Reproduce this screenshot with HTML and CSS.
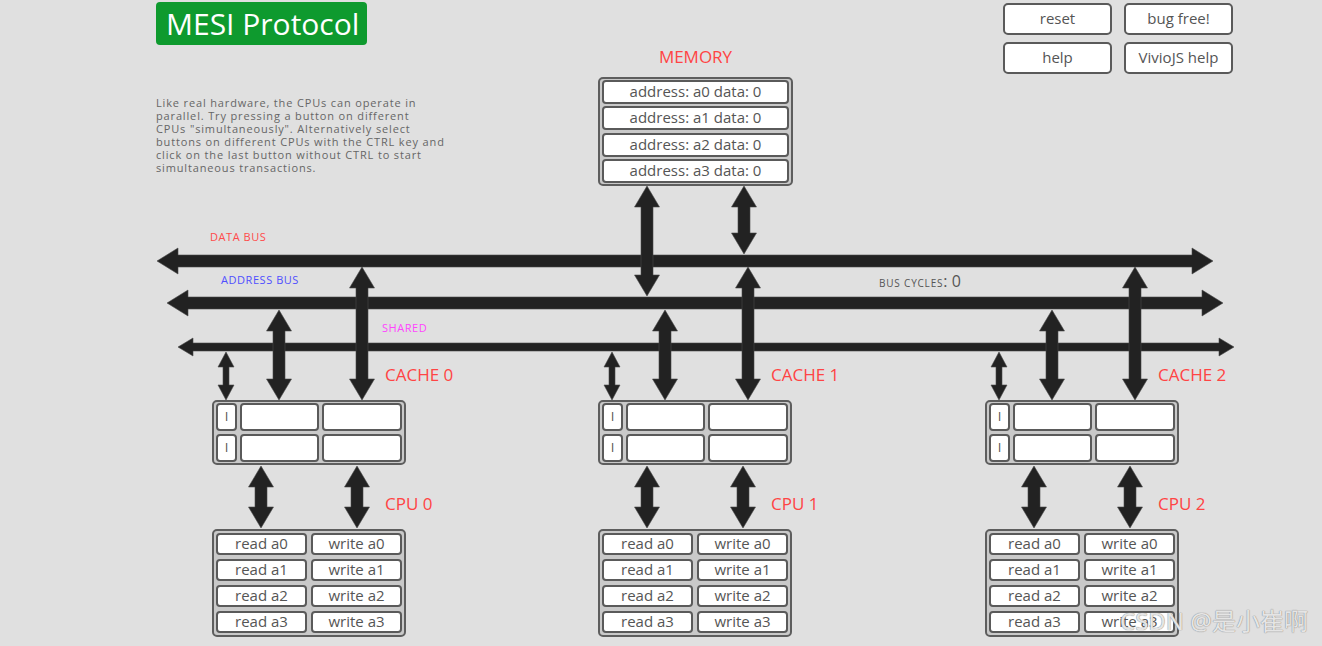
FILE: index.html
```
<!DOCTYPE html>
<html>
<head>
<meta charset="utf-8">
<title>MESI Protocol</title>
<link rel="stylesheet" href="styles.css">
</head>
<body>
<div class="stage">
  <svg class="wires" width="1322" height="646" viewBox="0 0 1322 646">
    <defs>
      <g id="cacheArrows">
        <polygon points="226,352 234,367 229,367 229,385 234,385 226,400 218,385 223,385 223,367 218,367"/>
        <polygon points="279,310 291.5,331 285,331 285,379 291.5,379 279,400 266.5,379 273,379 273,331 266.5,331"/>
        <polygon points="362,267 374.5,288 368,288 368,379 374.5,379 362,400 349.5,379 356,379 356,288 349.5,288"/>
        <polygon points="261,466 273.5,487 267,487 267,507 273.5,507 261,528 248.5,507 255,507 255,487 248.5,487"/>
        <polygon points="357,466 369.5,487 363,487 363,507 369.5,507 357,528 344.5,507 351,507 351,487 344.5,487"/>
      </g>
    </defs>
    <g class="arrows">
      <polygon points="157,261 178,248 178,255 1192,255 1192,248 1213,261 1192,274 1192,267 178,267 178,274"/>
      <polygon points="167,303 188,290 188,297 1202,297 1202,290 1223,303 1202,316 1202,309 188,309 188,316"/>
      <polygon points="178,347 193,338 193,343 1219,343 1219,338 1234,347 1219,356 1219,351 193,351 193,356"/>
      <polygon points="647,186 659.5,207 653,207 653,275 659.5,275 647,296 634.5,275 641,275 641,207 634.5,207"/>
      <polygon points="744,186 756.5,207 750,207 750,233 756.5,233 744,254 731.5,233 738,233 738,207 731.5,207"/>
      <use href="#cacheArrows"/>
      <use href="#cacheArrows" x="386"/>
      <use href="#cacheArrows" x="773"/>
    </g>
  </svg>

  <div class="title">MESI Protocol</div>
  <p class="intro">Like real hardware, the CPUs can operate in<br>parallel. Try pressing a button on different<br>CPUs "simultaneously". Alternatively select<br>buttons on different CPUs with the CTRL key and<br>click on the last button without CTRL to start<br>simultaneous transactions.</p>

  <div class="controls">
    <div class="btn">reset</div>
    <div class="btn">bug free!</div>
    <div class="btn">help</div>
    <div class="btn">VivioJS help</div>
  </div>

  <div class="label mem-label">MEMORY</div>
  <div class="box memory">
    <div class="cell">address: a0 data: 0</div>
    <div class="cell">address: a1 data: 0</div>
    <div class="cell">address: a2 data: 0</div>
    <div class="cell">address: a3 data: 0</div>
  </div>

  <div class="bus-label data">DATA BUS</div>
  <div class="bus-label addr">ADDRESS BUS</div>
  <div class="bus-label shared">SHARED</div>
  <div class="cycles"><span class="sc">BUS CYCLES</span>: 0</div>

  <div class="label cache-label c0">CACHE 0</div>
  <div class="label cache-label c1">CACHE 1</div>
  <div class="label cache-label c2">CACHE 2</div>
  <div class="label cpu-label c0">CPU 0</div>
  <div class="label cpu-label c1">CPU 1</div>
  <div class="label cpu-label c2">CPU 2</div>

  <div class="box cache c0">
    <div class="cell">I</div><div class="cell"></div><div class="cell"></div>
    <div class="cell">I</div><div class="cell"></div><div class="cell"></div>
  </div>
  <div class="box cache c1">
    <div class="cell">I</div><div class="cell"></div><div class="cell"></div>
    <div class="cell">I</div><div class="cell"></div><div class="cell"></div>
  </div>
  <div class="box cache c2">
    <div class="cell">I</div><div class="cell"></div><div class="cell"></div>
    <div class="cell">I</div><div class="cell"></div><div class="cell"></div>
  </div>

  <div class="box cpu c0">
    <div class="cell">read a0</div><div class="cell">write a0</div>
    <div class="cell">read a1</div><div class="cell">write a1</div>
    <div class="cell">read a2</div><div class="cell">write a2</div>
    <div class="cell">read a3</div><div class="cell">write a3</div>
  </div>
  <div class="box cpu c1">
    <div class="cell">read a0</div><div class="cell">write a0</div>
    <div class="cell">read a1</div><div class="cell">write a1</div>
    <div class="cell">read a2</div><div class="cell">write a2</div>
    <div class="cell">read a3</div><div class="cell">write a3</div>
  </div>
  <div class="box cpu c2">
    <div class="cell">read a0</div><div class="cell">write a0</div>
    <div class="cell">read a1</div><div class="cell">write a1</div>
    <div class="cell">read a2</div><div class="cell">write a2</div>
    <div class="cell">read a3</div><div class="cell">write a3</div>
  </div>

  <div class="watermark">CSDN @是小崔啊</div>
</div>
</body>
</html>
```
FILE: styles.css
```
html, body {
  margin: 0;
  padding: 0;
  background: #e0e0e0;
}
.stage {
  position: relative;
  width: 1322px;
  height: 646px;
  overflow: hidden;
  font-family: "Open Sans", "Noto Sans", sans-serif;
  color: #555;
}
.wires {
  position: absolute;
  left: 0;
  top: 0;
}
.arrows {
  fill: #222;
  stroke: #4a4a4a;
  stroke-width: 0.6;
}
.title {
  position: absolute;
  left: 156px;
  top: 2px;
  width: 201px;
  height: 43px;
  padding-left: 10px;
  background: #0e9a2e;
  color: #fff;
  font-size: 30px;
  line-height: 43px;
  border-radius: 4px;
}
.intro {
  position: absolute;
  left: 156px;
  top: 96px;
  margin: 0;
  font-size: 11px;
  line-height: 13px;
  letter-spacing: 0.85px;
  color: #666;
}
.controls {
  position: absolute;
  left: 1003px;
  top: 3px;
  display: grid;
  grid-template-columns: 109px 109px;
  grid-auto-rows: 32px;
  column-gap: 12px;
  row-gap: 7px;
}
.btn {
  box-sizing: border-box;
  background: #fff;
  border: 2px solid #5a5a5a;
  border-radius: 5px;
  display: flex;
  align-items: center;
  justify-content: center;
  padding-bottom: 3px;
  font-size: 15px;
  color: #555;
}
.label {
  position: absolute;
  font-size: 17px;
  line-height: 20px;
  color: #ff4444;
  white-space: nowrap;
}
.mem-label {
  left: 598px;
  top: 47px;
  width: 195px;
  text-align: center;
}
.cache-label { top: 365px; }
.cpu-label { top: 494px; }
.cache-label.c0, .cpu-label.c0 { left: 385px; }
.cache-label.c1, .cpu-label.c1 { left: 771px; }
.cache-label.c2, .cpu-label.c2 { left: 1158px; }

.bus-label {
  position: absolute;
  font-size: 11px;
  line-height: 16px;
  letter-spacing: 0.55px;
  white-space: nowrap;
}
.bus-label.data { left: 210px; top: 229px; color: #ff4a4a; }
.bus-label.addr { left: 221px; top: 272px; color: #4f4fff; }
.bus-label.shared { left: 382px; top: 320px; color: #ff44ff; }
.cycles {
  position: absolute;
  left: 879px;
  top: 271px;
  font-size: 16px;
  line-height: 20px;
  color: #555;
  white-space: nowrap;
}
.cycles .sc {
  font-size: 10px;
  letter-spacing: 0.8px;
}

.box {
  position: absolute;
  box-sizing: border-box;
  background: #c9c9c9;
  border: 2px solid #5e5e5e;
  border-radius: 5px;
  display: grid;
}
.cell {
  box-sizing: border-box;
  background: #fff;
  border: 2px solid #5a5a5a;
  border-radius: 4px;
  display: flex;
  align-items: center;
  justify-content: center;
  padding-bottom: 2px;
  font-size: 15px;
  color: #555;
  white-space: nowrap;
}
.memory {
  left: 598px;
  top: 77px;
  width: 195px;
  height: 109px;
  padding: 0 2px;
  grid-template-columns: 1fr;
  grid-auto-rows: 24px;
  row-gap: 2.5px;
  align-content: center;
}
.cache {
  top: 400px;
  width: 194px;
  height: 65px;
  padding: 1px 1px 1px 2px;
  grid-template-columns: 21px 79px 80px;
  grid-auto-rows: 28px;
  column-gap: 3px;
  row-gap: 3px;
  align-content: center;
}
.cache .cell { font-size: 13px; }
.cpu {
  top: 529px;
  width: 194px;
  height: 108px;
  padding: 2px;
  grid-template-columns: 91px 91px;
  grid-auto-rows: 22px;
  column-gap: 4px;
  row-gap: 4px;
  align-content: center;
}
.box.c0 { left: 212px; }
.box.c1 { left: 598px; }
.box.c2 { left: 985px; }

.watermark {
  position: absolute;
  left: 1120px;
  top: 606px;
  font-family: "Noto Sans", "Noto Sans CJK SC", sans-serif;
  font-size: 24px;
  line-height: 30px;
  color: rgba(255, 255, 255, 0.8);
  text-shadow: 0 0 1px #8a8a8a, 0 0 1px #8a8a8a;
  white-space: nowrap;
}
```
